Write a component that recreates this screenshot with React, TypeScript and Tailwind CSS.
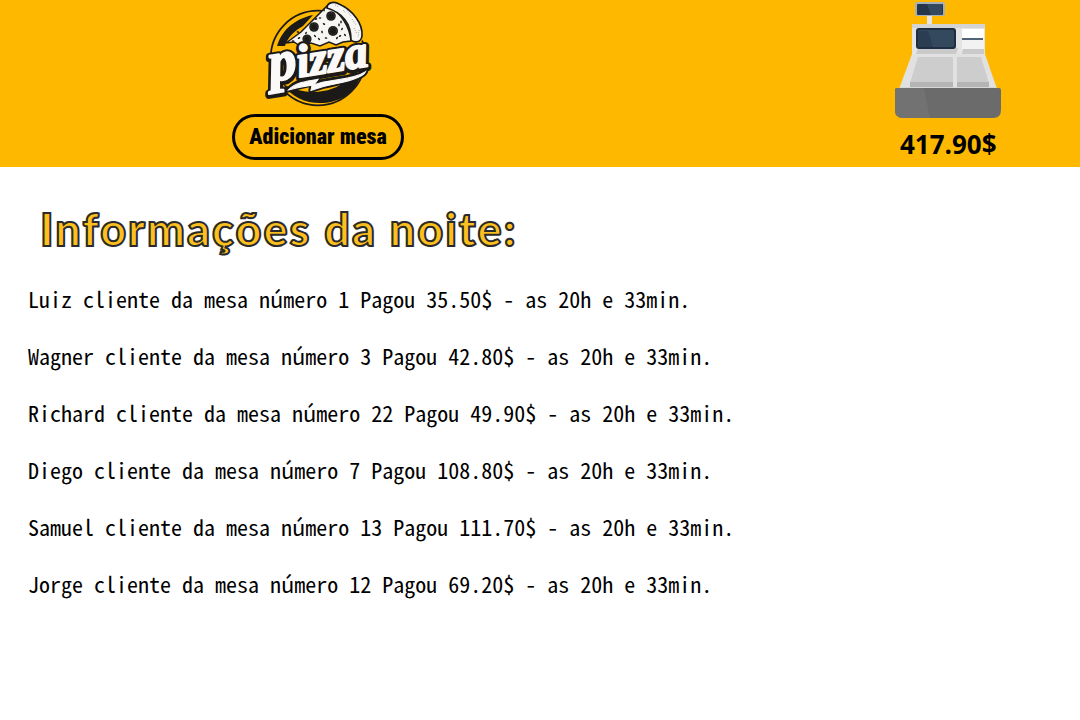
const payments = [
  { name: "Luiz", table: 1, total: "35.50" },
  { name: "Wagner", table: 3, total: "42.80" },
  { name: "Richard", table: 22, total: "49.90" },
  { name: "Diego", table: 7, total: "108.80" },
  { name: "Samuel", table: 13, total: "111.70" },
  { name: "Jorge", table: 12, total: "69.20" },
];

const olives = [
  [76, 16, 4.8],
  [59, 27, 4.8],
  [78, 31, 5],
  [52, 39, 4.6],
];

const crumbs = [
  [65, 18], [69, 24], [67, 32], [51, 33], [44, 38], [38, 41], [60, 36],
  [86, 22], [87, 29], [85, 36], [71, 38], [64, 39], [69, 10], [82, 38],
  [61, 19], [43, 32], [90, 35], [84, 25],
];

function PizzaLogo() {
  return (
    <svg className="h-[110px] w-[110px]" viewBox="8 0 110 110" role="img" aria-label="Pizza">
      <circle cx="63" cy="58" r="47.3" fill="none" stroke="#1c1a19" strokeWidth="1.8" />
      <path d="M22 46C26 32 38 19 58 15L48 26C39 31 33 37 30 46Z" fill="#1c1a19" />
      <path d="M28 84C49 96 78 94 91 80L105 77C94 110 44 111 28 84Z" fill="#1c1a19" />
      <g>
        <path d="M74 5L103 12L108 40L94 48L40 48L30 44Z" fill="#ffb800" />
        <path d="M31 43L46 32L73 5C86 13 95 27 96 41L88 42L81 45L74 42L65 46L56 43L45 46L39 42Z" fill="#f7f6f3" stroke="#1c1a19" strokeWidth="1.5" />
        <path d="M72 8C72 2 80 1 84 4C98 10 108 24 107 36C106 43 99 43 96 40C96 24 88 13 72 8Z" fill="#f7f6f3" stroke="#1c1a19" strokeWidth="1.7" />
        <path d="M80 5L84 7M88 10L91 13M92 10L96 16M97 19L101 25M99 28L102 34M104 30L103 37M88 7L91 9" fill="none" stroke="#a29f99" strokeWidth="1" strokeDasharray="1 1.2" />
      </g>
      {crumbs.map(([x, y], index) => (
        <ellipse key={index} cx={x} cy={y} rx="1.4" ry="0.8" fill="#1c1a19" transform={`rotate(${index * 37} ${x} ${y})`} />
      ))}
      {olives.map(([x, y, r], index) => (
        <g key={index}>
          <circle cx={x} cy={y} r={r} fill="#1c1a19" />
          <circle cx={x} cy={y} r={r - 1.5} fill="none" stroke="#65615d" strokeWidth="0.6" strokeDasharray="1 1.2" />
        </g>
      ))}
      <g transform="rotate(-9 63 65)">
        <text x="14" y="75" strokeWidth="8" stroke="#1c1a19" fill="#1c1a19" strokeLinejoin="round" className="font-['Liberation_Serif',serif] font-bold italic">
          <tspan fontSize="56">p</tspan><tspan fontSize="46">izza</tspan>
        </text>
        <path d="M30 85C37 78 49 78 61 78L56 83C70 79 94 85 109 79C105 86 80 86 65 87L52 89L54 83C46 83 37 84 30 85Z" fill="#1c1a19" stroke="#1c1a19" strokeWidth="5" strokeLinejoin="round" />
        <text x="14" y="74" fill="#faf9f7" stroke="#faf9f7" strokeWidth="2" strokeLinejoin="round" aria-hidden="true" className="font-['Liberation_Serif',serif] font-bold italic">
          <tspan fontSize="56">p</tspan><tspan fontSize="46">izza</tspan>
        </text>
        <path d="M30 85C37 79 49 79 61 79L56 84C70 80 94 86 109 79C105 86 80 86 65 87L52 89L54 84C46 84 37 84 30 85Z" fill="#faf9f7" stroke="#faf9f7" strokeWidth="1" />
      </g>
    </svg>
  );
}

function CashRegister() {
  return (
    <svg className="h-[119px] w-[108px]" viewBox="10 0 108 119" aria-hidden="true">
      <path d="M43 16h5v9h-5z" fill="#e6e6e6" />
      <rect x="31" y="2" width="30" height="14" rx="2" fill="#a7afb9" />
      <rect x="33" y="4" width="26" height="11" rx="1" fill="#26364a" />
      <path d="M43 4h15v11H47z" fill="#34495e" />
      <path d="M28 24h73v31H28z" fill="#e4e4e4" />
      <path d="M28 24h73v4H28z" fill="#d4d4d4" />
      <path d="M34 48h40l-2 6H32zM79 49h21v5H78z" fill="#cacaca" />
      <rect x="32" y="28" width="40" height="21" rx="3" fill="#1f2e40" />
      <path d="M35 30h34q1 0 1 2v14q0 1-2 1H35q-1 0-1-2V32q0-2 1-2" fill="#34495e" />
      <path d="M34 31h10l5 16H34z" fill="#2b3d52" />
      <path d="M78 29h22v20H78z" fill="#f2f2f2" />
      <path d="M78 29h22v9H78z" fill="#fff" />
      <path d="M78 38h21v2H78z" fill="#526476" />
      <path d="M28 54h73l12 35H15z" fill="#e1e1e1" />
      <path d="M34 57h35v26H26zM73 57h24l8 26H73z" fill="#cdcdcd" />
      <path d="M26 82h43v5H26zM73 82h32v5H73z" fill="#b4b4b4" />
      <path d="M16 87h97v3H16z" fill="#d7d7d7" />
      <path d="M13 88h102q2 0 2 2v20q0 8-8 8H19q-8 0-8-8V90q0-2 2-2" fill="#6b6b6b" />
      <path d="M13 88h27l6 30H19q-8 0-8-8V90q0-2 2-2" fill="#727272" />
    </svg>
  );
}

export default function App() {
  return (
    <div className="min-h-screen bg-white text-black">
      <header className="flex items-start justify-between bg-[#ffb800] pr-[7.2%] pb-[7px] pl-[21.5%]">
        <div className="flex flex-col items-center gap-1">
          <PizzaLogo />
          <button type="button" className="h-[46px] rounded-full border-3 border-black px-3.5 font-['Roboto_Condensed','Open_Sans_Condensed',sans-serif] text-[22px] leading-6 font-black whitespace-nowrap">
            Adicionar mesa
          </button>
        </div>
        <div className="flex flex-col items-center gap-[9px]">
          <CashRegister />
          <p className="font-['Open_Sans',sans-serif] text-[26px] leading-8 font-bold">417.90$</p>
        </div>
      </header>
      <main className="px-7 pt-[30px]">
        <h1 className="pl-3 font-['Lato',sans-serif] text-[45px] leading-[64px] font-black tracking-[2px] text-[#ffc01e] [-webkit-text-stroke:2px_#2b2b2b]">
          Informações da noite:
        </h1>
        <ul className="mt-[25px] flex flex-col gap-[33px] font-['Noto_Sans_Mono_CJK_SC','Liberation_Mono',monospace] text-[22px] leading-6">
          {payments.map(({ name, table, total }) => (
            <li key={name}>{`${name} cliente da mesa número ${table} Pagou ${total}$ - as 20h e 33min.`}</li>
          ))}
        </ul>
      </main>
    </div>
  );
}
